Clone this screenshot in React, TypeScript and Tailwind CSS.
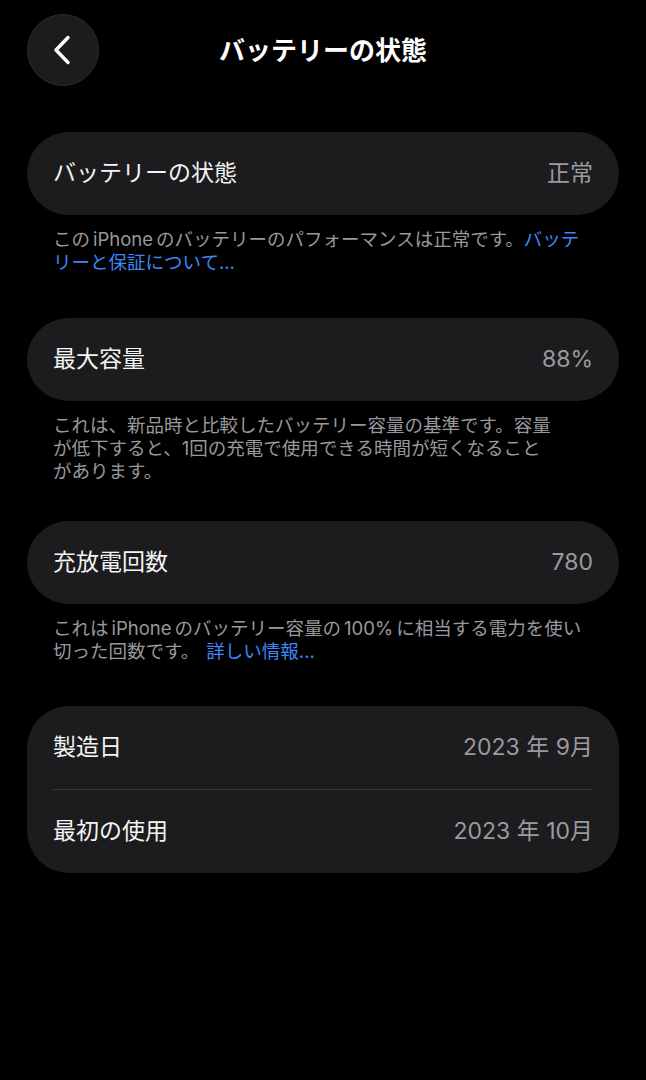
import React from "react";

const FONT = {
  fontFamily: "Inter, 'Noto Sans CJK JP', 'Noto Sans', sans-serif",
};

function BackButton() {
  return (
    <button className="flex h-[72px] w-[72px] items-center justify-center rounded-full border border-[#2c2c2e] bg-[#1c1c1e]">
      <svg width="20" height="30" viewBox="0 0 20 30" fill="none" className="-ml-[3px]">
        <path
          d="M16 2.5 L4 15 L16 27.5"
          stroke="#ffffff"
          strokeWidth="3.4"
          strokeLinecap="round"
          strokeLinejoin="round"
        />
      </svg>
    </button>
  );
}

function Row({ label, value }: { label: string; value: string }) {
  return (
    <div className="flex h-[83px] items-center justify-between px-[26px]">
      <span className="text-[23px] text-[#f4f4f5]">{label}</span>
      <span className="text-[23px] text-[#9a9a9f]">{value}</span>
    </div>
  );
}

function Pill({ label, value }: { label: string; value: string }) {
  return (
    <div className="rounded-full bg-[#1c1c1e]">
      <Row label={label} value={value} />
    </div>
  );
}

function Note({ children, className }: { children: React.ReactNode; className: string }) {
  return (
    <p
      className={`mt-[13px] whitespace-nowrap px-[26px] text-[18.5px] leading-[23px] text-[#98989d] ${className}`}
    >
      {children}
    </p>
  );
}

const link = "text-[#3f86f4]";
const latin = "mx-[3px]";

export default function App() {
  return (
    <div className="min-h-[1080px] w-full bg-black" style={FONT}>
      <header className="grid grid-cols-[72px_1fr_72px] items-center px-[27px] pt-[14px]">
        <BackButton />
        <h1 className="text-center text-[26px] font-semibold text-white">バッテリーの状態</h1>
        <div />
      </header>

      <main className="mt-[46px] px-[27px]">
        <Pill label="バッテリーの状態" value="正常" />
        <Note className="mb-[44px]">
          この<span className={latin}>iPhone</span>のバッテリーのパフォーマンスは正常です。
          <span className={link}>
            バッテ
            <br />
            リーと保証について...
          </span>
        </Note>

        <Pill label="最大容量" value="88%" />
        <Note className="mb-[38px]">
          これは、新品時と比較したバッテリー容量の基準です。容量
          <br />
          が低下すると、1回の充電で使用できる時間が短くなること
          <br />
          があります。
        </Note>

        <Pill label="充放電回数" value="780" />
        <Note className="mb-[43px]">
          これは<span className={latin}>iPhone</span>のバッテリー容量の<span className="mx-[3px]">100%</span>に相当する電力を使い
          <br />
          切った回数です。 <span className={`${link} ml-[2px]`}>詳しい情報...</span>
        </Note>

        <div className="rounded-[42px] bg-[#1c1c1e]">
          <Row label="製造日" value="2023 年 9月" />
          <div className="mx-[26px] h-px bg-[#3a3a3c]" />
          <Row label="最初の使用" value="2023 年 10月" />
        </div>
      </main>
    </div>
  );
}
